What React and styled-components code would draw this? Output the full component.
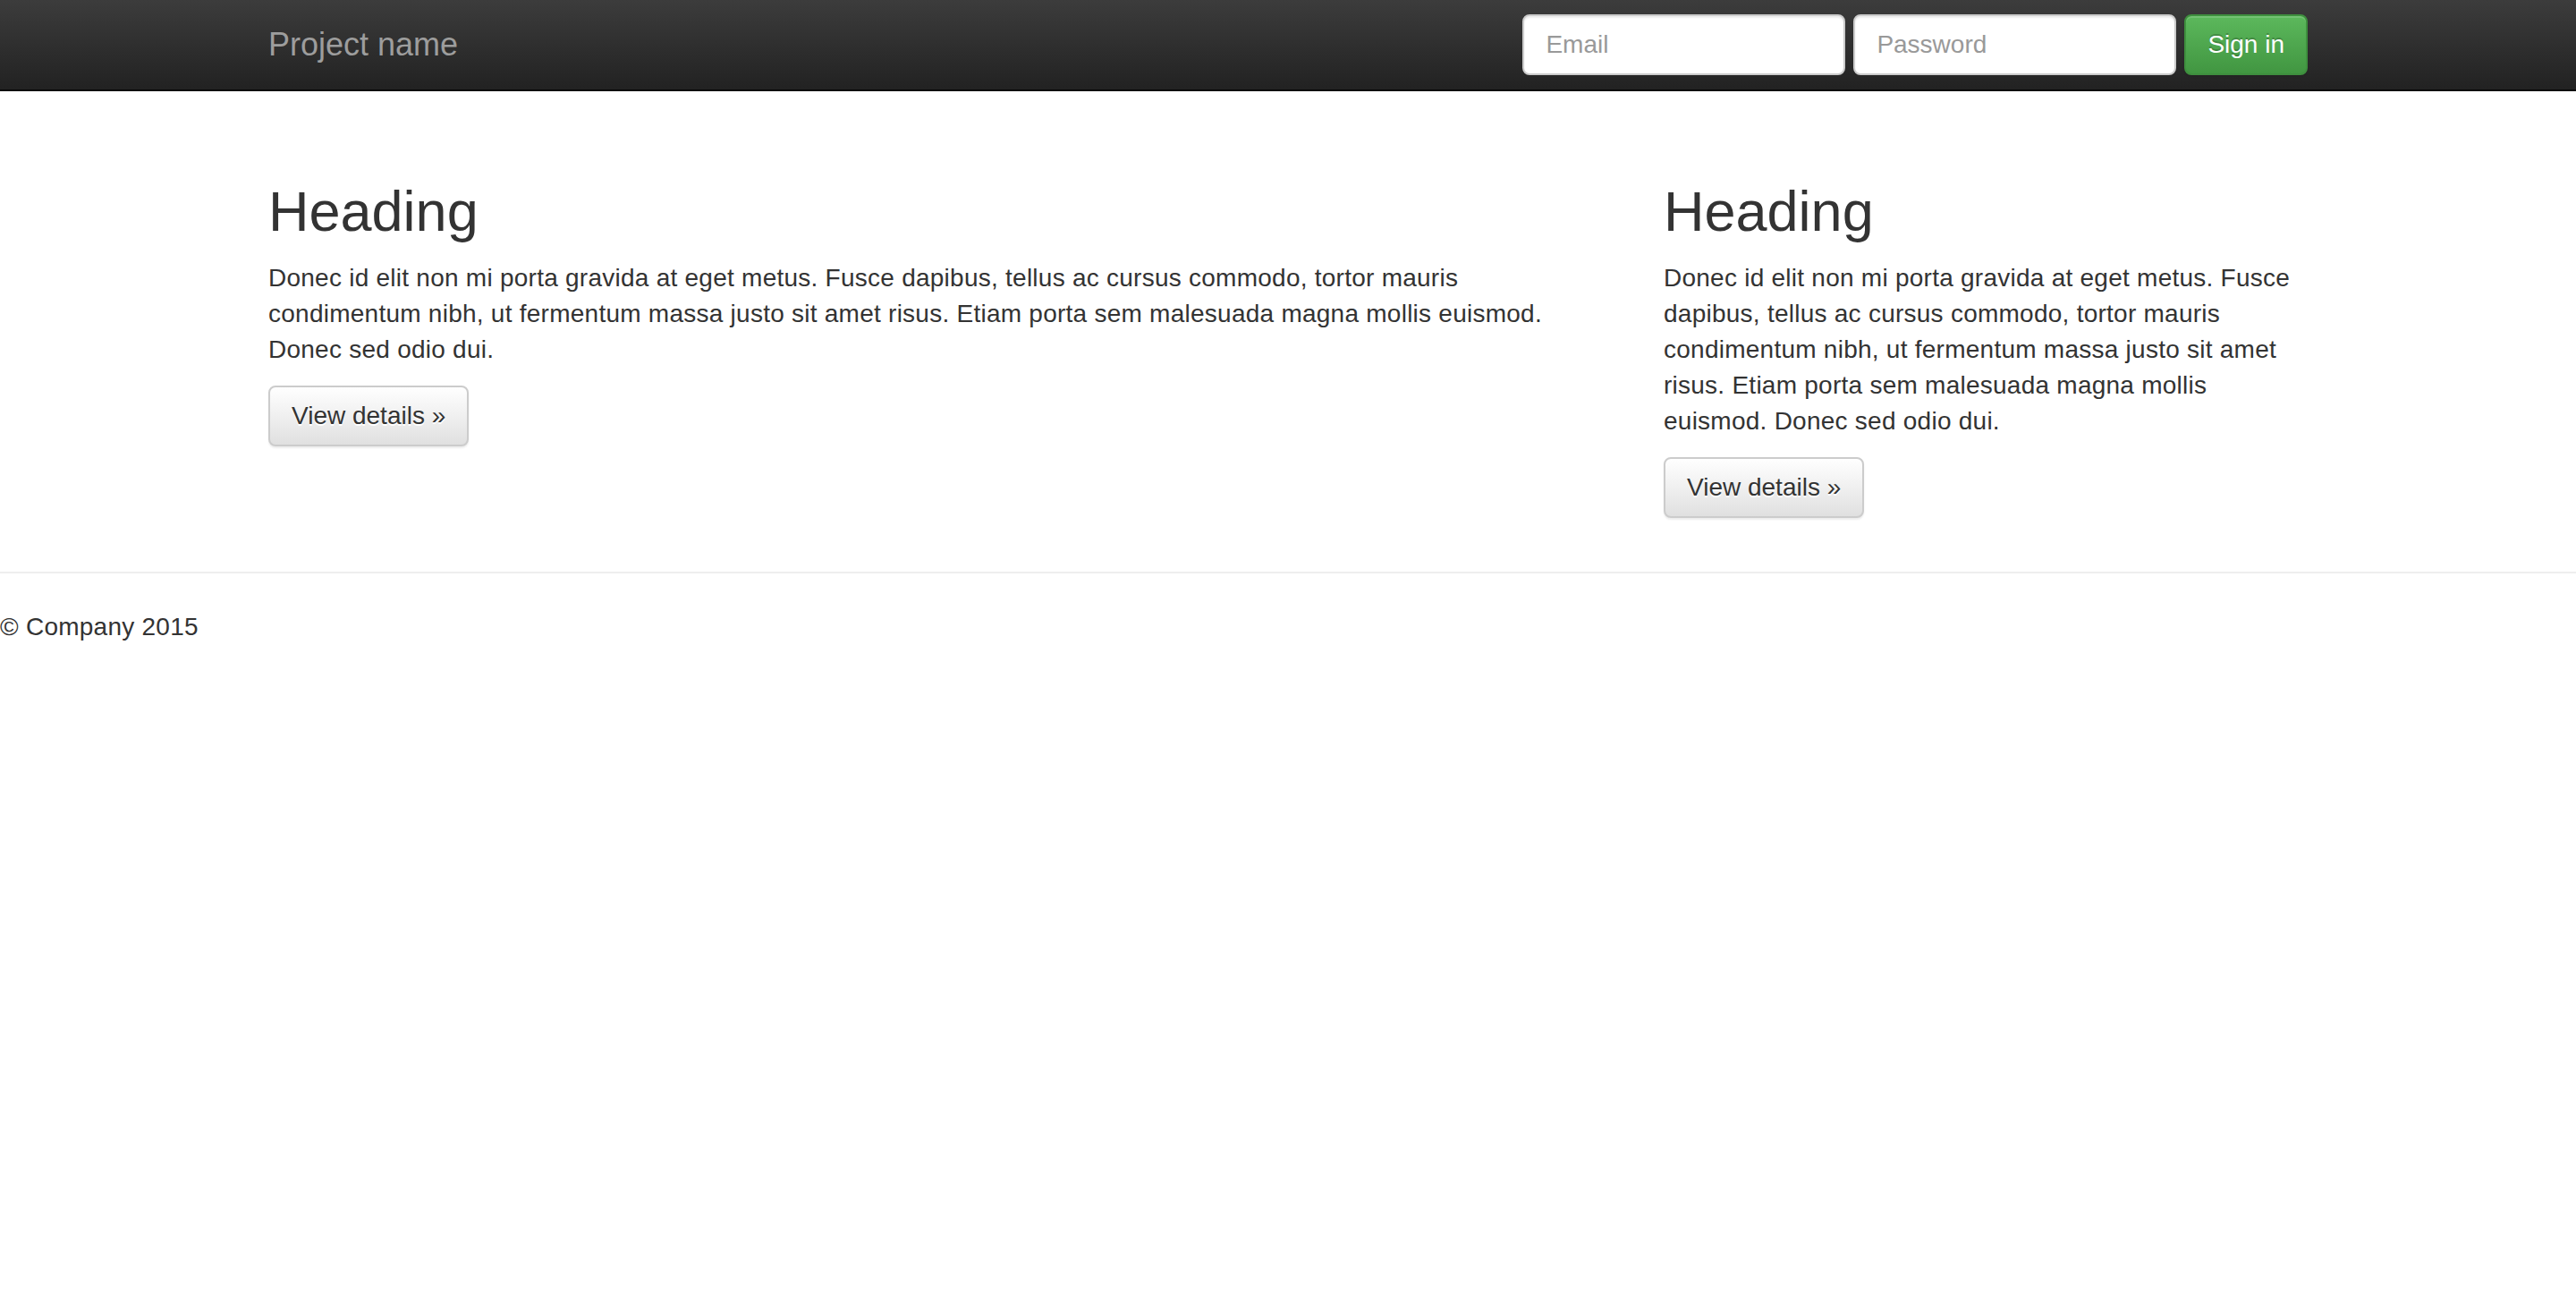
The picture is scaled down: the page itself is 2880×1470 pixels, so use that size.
import React from "react";
import styled, { createGlobalStyle } from "styled-components";

const GlobalStyle = createGlobalStyle`
  html, body { margin: 0; padding: 0; background: #fff; }
  body {
    font-family: "Liberation Sans", Helvetica, Arial, sans-serif;
    font-size: 28px;
    line-height: 40px;
    color: #333;
  }
  * { box-sizing: border-box; }
`;

const Navbar = styled.header`
  min-height: 100px;
  background-image: linear-gradient(to bottom, #3c3c3c 0%, #222 100%);
  border-bottom: 2px solid #080808;
  margin-bottom: 60px;
`;

const Container = styled.div`
  width: 2340px;
  margin: 0 auto;
  padding: 0 30px;
  display: ${(p) => (p.$bar ? "flex" : "block")};
  justify-content: space-between;
  align-items: flex-start;
`;

const Brand = styled.a`
  display: block;
  font-size: 36px;
  line-height: 40px;
  padding: 30px 0;
  color: #9d9d9d;
  text-decoration: none;
`;

const SignInForm = styled.form`
  display: flex;
  gap: 9px;
  margin-top: 16px;
`;

const Input = styled.input`
  width: 361px;
  height: 68px;
  padding: 12px 24px;
  font-family: inherit;
  font-size: 28px;
  line-height: 40px;
  color: #555;
  background: #fff;
  border: 2px solid #ccc;
  border-radius: 8px;
  box-shadow: inset 0 2px 2px rgba(0, 0, 0, 0.075);
  outline: none;
  &::placeholder { color: #999; }
`;

const Button = styled.button`
  display: inline-block;
  height: 68px;
  padding: 12px 24px;
  font-family: inherit;
  font-size: 28px;
  line-height: 40px;
  letter-spacing: normal;
  border-radius: 8px;
  cursor: pointer;
  color: ${(p) => (p.$variant === "success" ? "#fff" : "#333")};
  border: 2px solid ${(p) => (p.$variant === "success" ? "#3e8f3e" : "#ccc")};
  background-image: ${(p) =>
    p.$variant === "success"
      ? "linear-gradient(to bottom, #5cb85c 0%, #419641 100%)"
      : "linear-gradient(to bottom, #fff 0%, #e0e0e0 100%)"};
  text-shadow: ${(p) =>
    p.$variant === "success" ? "0 -2px 0 rgba(0,0,0,0.2)" : "0 2px 0 #fff"};
  box-shadow: inset 0 2px 0 rgba(255, 255, 255, 0.15),
    0 2px 2px rgba(0, 0, 0, 0.075);
`;

const Row = styled.div`
  display: flex;
  margin: 0 -30px;
`;

const Col = styled.div`
  flex: 0 0 ${(p) => (p.$span / 12) * 100}%;
  padding: 0 30px;
`;

const Heading = styled.h2`
  font-size: 63px;
  font-weight: 500;
  line-height: 1.1;
  margin: 40px 0 20px;
  color: #333;
`;

const Para = styled.p`
  margin: 0 0 20px;
  letter-spacing: 0.25px;
`;

const Rule = styled.hr`
  margin: 40px 0;
  border: 0;
  border-top: 2px solid #eee;
`;

const Footer = styled.footer`
  letter-spacing: 0.25px;
  p { margin: 0 0 20px; }
`;

const text =
  "Donec id elit non mi porta gravida at eget metus. Fusce dapibus, tellus ac cursus commodo, tortor mauris condimentum nibh, ut fermentum massa justo sit amet risus. Etiam porta sem malesuada magna mollis euismod. Donec sed odio dui.";

export default function App() {
  return (
    <>
      <GlobalStyle />
      <Navbar>
        <Container $bar>
          <Brand href="#">Project name</Brand>
          <SignInForm onSubmit={(e) => e.preventDefault()}>
            <Input type="text" placeholder="Email" />
            <Input type="password" placeholder="Password" />
            <Button type="submit" $variant="success">Sign in</Button>
          </SignInForm>
        </Container>
      </Navbar>
      <Container>
        <Row>
          <Col $span={8}>
            <Heading>Heading</Heading>
            <Para>{text}</Para>
            <Para>
              <Button type="button">View details »</Button>
            </Para>
          </Col>
          <Col $span={4}>
            <Heading>Heading</Heading>
            <Para>{text}</Para>
            <Para>
              <Button type="button">View details »</Button>
            </Para>
          </Col>
        </Row>
      </Container>
      <Rule />
      <Footer>
        <p>© Company 2015</p>
      </Footer>
    </>
  );
}
